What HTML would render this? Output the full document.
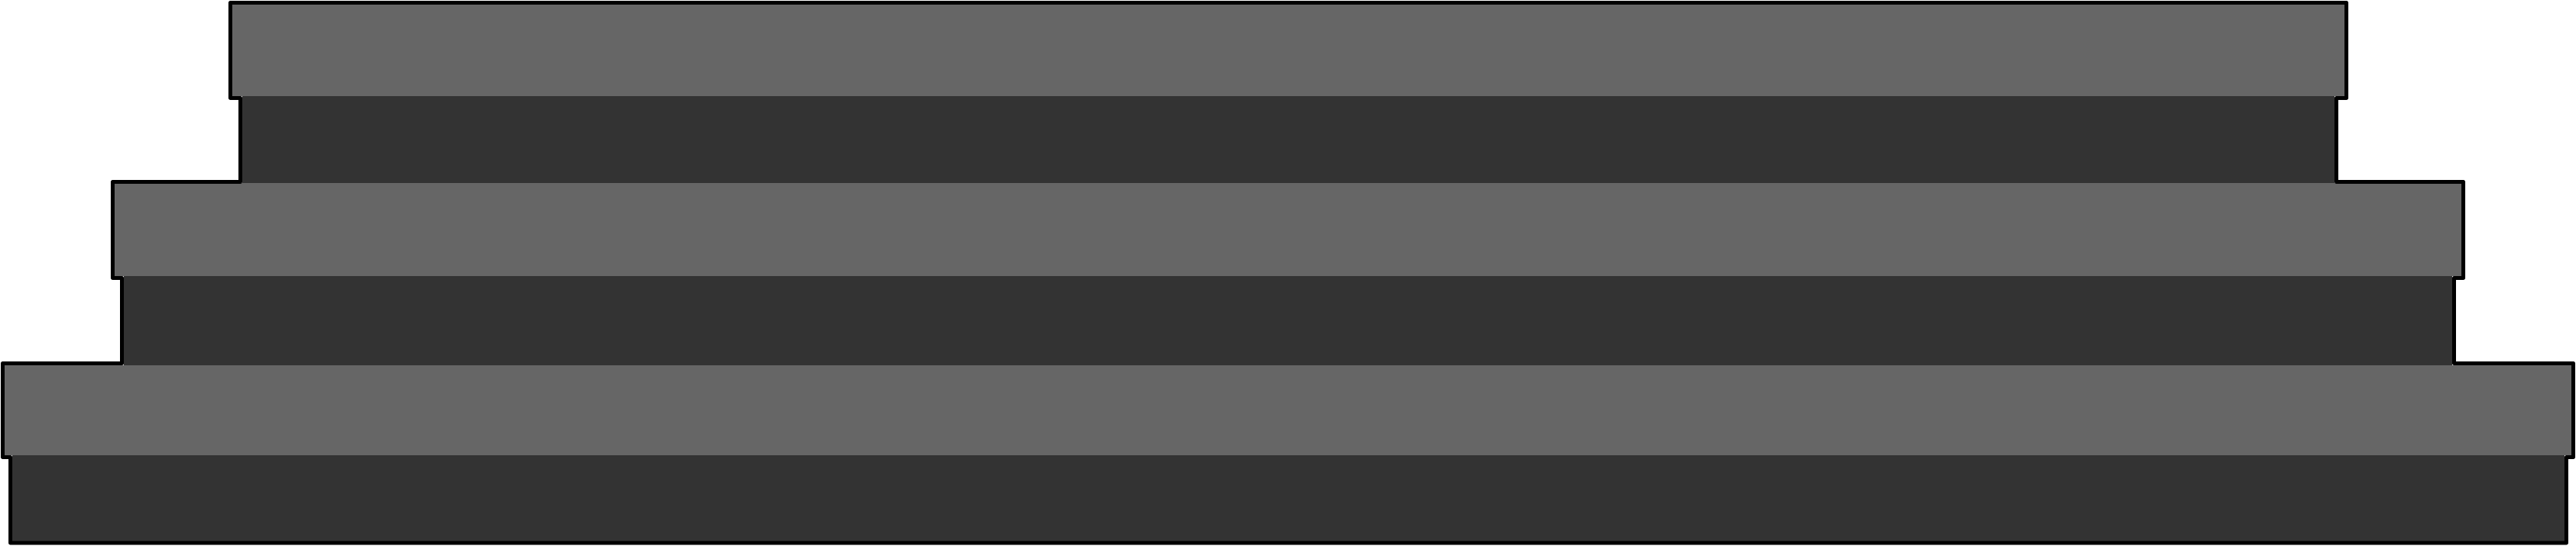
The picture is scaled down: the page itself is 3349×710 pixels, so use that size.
<!DOCTYPE html>
<html><head><meta charset="utf-8"><style>html,body{margin:0;padding:0;background:#fff}svg{display:block}</style></head>
<body>
<svg width="3349" height="710" viewBox="0 0 3349 710" xmlns="http://www.w3.org/2000/svg">
<rect x="302" y="4" width="2746" height="121" fill="#666"/>
<rect x="315" y="125" width="2720" height="113" fill="#333"/>
<rect x="149" y="238" width="3051" height="121" fill="#666"/>
<rect x="161" y="359" width="3027" height="116" fill="#333"/>
<rect x="6" y="475" width="3337" height="117" fill="#666"/>
<rect x="16" y="592" width="3318" height="112" fill="#333"/>
<path d="M299.5 3.5 H3050.5 V127.5 H3037.5 V236.5 H3202.5 V361.5 H3190.5 V472.5 H3345.5 V594.5 H3336.5 V706 H13.5 V594.5 H3.5 V472.5 H158.5 V361.5 H146.5 V236.5 H312.5 V127.5 H299.5 Z" fill="none" stroke="#000" stroke-width="5" stroke-linejoin="round"/>
</svg>
</body></html>
